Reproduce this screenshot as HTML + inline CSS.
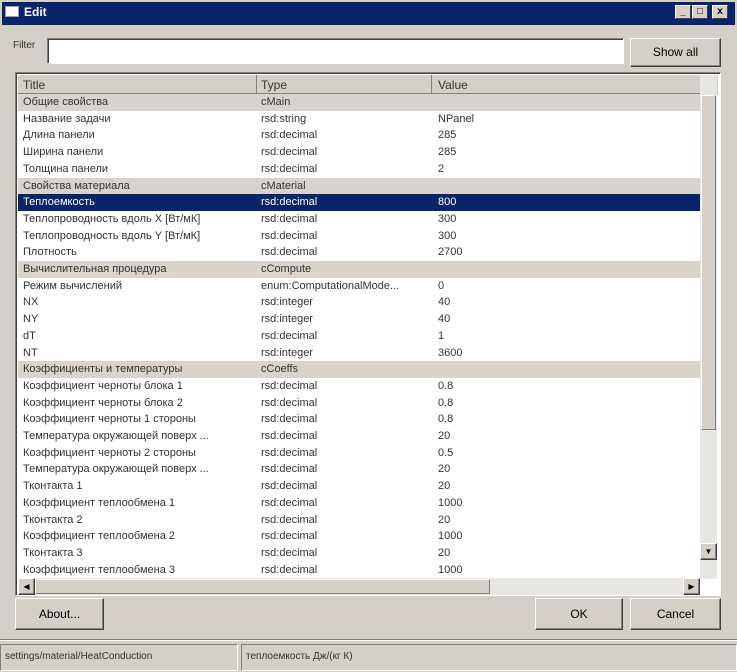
<!DOCTYPE html>
<html><head><meta charset="utf-8"><style>
*{margin:0;padding:0;box-sizing:border-box}
body{width:737px;height:672px;background:#d4d0c8;font-family:"Liberation Sans",sans-serif;font-size:11px;color:#000;position:relative;overflow:hidden}
.abs{position:absolute}
.title{left:0;top:0;width:737px;height:25px;background:#0a246a;border:2px solid #d4d0c8;border-bottom:none}
.tb{top:5px;width:16px;height:14px;background:#d4d0c8;border:1px solid;border-color:#fff #404040 #404040 #fff;font-size:10px;font-weight:bold;text-align:center;line-height:12px}
.btn{background:#d4d0c8;border:1px solid;border-color:#fff #404040 #404040 #fff;box-shadow:inset -1px -1px 0 #808080;text-align:center;font-size:12px}
.list{left:15px;top:72px;width:706px;height:524px;background:#fff;border:1px solid;border-color:#808080 #fff #fff #808080;box-shadow:inset 1px 1px 0 #404040;overflow:hidden}
.hdr{position:absolute;left:2px;top:2px;width:700px;height:19px;background:#d4d0c8;border-bottom:1px solid #808080;font-size:12px;color:#333}
.hdr span{position:absolute;top:3px}
.row{position:absolute;left:2px;width:682px;height:16.7px;font-size:11px;color:#333;white-space:nowrap}
.row span{position:absolute;top:2px;overflow:hidden}
.g{background:#d8d4cc}
.sel{background:#0a246a;color:#fff}
.c1{left:5px;width:230px}.c2{left:243px;width:170px}.c3{left:420px}
.vs{position:absolute;left:684px;top:2px;width:17px;height:504px;background:#e8e6e0}
.hs{position:absolute;left:2px;top:505px;width:682px;height:17px;background:#e8e6e0}
</style></head><body>
<div class="abs title"></div>
<div class="abs" style="left:5px;top:6px;width:14px;height:11px;background:#fff;border:1px solid #a0a0a0"></div>
<div class="abs" style="left:24px;top:5px;color:#fff;font-weight:bold;font-size:12px">Edit</div>
<div class="abs tb" style="left:675px">_</div>
<div class="abs tb" style="left:692px">□</div>
<div class="abs tb" style="left:712px">x</div>
<div class="abs" style="left:13px;top:40px;font-size:10px;color:#333">Filter</div>
<div class="abs" style="left:47px;top:38px;width:577px;height:26px;background:#fff;border:1px solid;border-color:#808080 #fff #fff #808080;box-shadow:inset 1px 1px 0 #404040"></div>
<div class="abs btn" style="left:630px;top:38px;width:91px;height:29px;line-height:27px">Show all</div>
<div class="abs list">
<div class="hdr"><span style="left:5px">Title</span><span style="left:243px">Type</span><span style="left:420px">Value</span>
<div class="abs" style="left:238px;top:0;width:1px;height:19px;background:#808080"></div>
<div class="abs" style="left:413px;top:0;width:1px;height:19px;background:#808080"></div>
<div class="abs" style="left:687px;top:4px;font-size:8px">▲</div></div>
<div id="rows"></div>
<div class="vs"><div style="position:absolute;left:1px;top:20px;width:15px;height:335px;background:#d4d0c8;border:1px solid;border-color:#fff #808080 #808080 #fff"></div>
<div class="btn" style="position:absolute;left:0;top:468px;width:17px;height:17px;font-size:8px;line-height:15px">▼</div></div>
<div class="hs"><div class="btn" style="position:absolute;left:0;top:0;width:17px;height:17px;font-size:8px;line-height:15px">◀</div>
<div style="position:absolute;left:17px;top:1px;width:455px;height:15px;background:#d4d0c8;border:1px solid;border-color:#fff #808080 #808080 #fff"></div>
<div class="btn" style="position:absolute;left:665px;top:0;width:17px;height:17px;font-size:8px;line-height:15px">▶</div></div>
</div>
<div class="abs btn" style="left:15px;top:598px;width:89px;height:32px;line-height:30px">About...</div>
<div class="abs btn" style="left:535px;top:598px;width:88px;height:32px;line-height:30px">OK</div>
<div class="abs btn" style="left:630px;top:598px;width:91px;height:32px;line-height:30px">Cancel</div>
<div class="abs" style="left:0;top:639px;width:737px;height:2px;border-top:1px solid #808080;border-bottom:1px solid #fff"></div>
<div class="abs" style="left:0;top:644px;width:238px;height:27px;border:1px solid;border-color:#808080 #fff #fff #808080;font-size:10px;padding:6px 4px;color:#333">settings/material/HeatConduction</div>
<div class="abs" style="left:241px;top:644px;width:496px;height:27px;border:1px solid;border-color:#808080 #fff #fff #808080;font-size:10px;padding:6px 4px;color:#333">теплоемкость Дж/(кг К)</div>
<script>
var d=[["Общие свойства","cMain","",1],["Название задачи","rsd:string","NPanel"],["Длина панели","rsd:decimal","285"],["Ширина панели","rsd:decimal","285"],["Толщина панели","rsd:decimal","2"],["Свойства материала","cMaterial","",1],["Теплоемкость","rsd:decimal","800",2],["Теплопроводность вдоль X [Вт/мК]","rsd:decimal","300"],["Теплопроводность вдоль Y [Вт/мК]","rsd:decimal","300"],["Плотность","rsd:decimal","2700"],["Вычислительная процедура","cCompute","",1],["Режим вычислений","enum:ComputationalMode...","0"],["NX","rsd:integer","40"],["NY","rsd:integer","40"],["dT","rsd:decimal","1"],["NT","rsd:integer","3600"],["Коэффициенты и температуры","cCoeffs","",1],["Коэффициент черноты блока 1","rsd:decimal","0.8"],["Коэффициент черноты блока 2","rsd:decimal","0.8"],["Коэффициент черноты 1 стороны","rsd:decimal","0.8"],["Температура окружающей поверх ...","rsd:decimal","20"],["Коэффициент черноты 2 стороны","rsd:decimal","0.5"],["Температура окружающей поверх ...","rsd:decimal","20"],["Тконтакта 1","rsd:decimal","20"],["Коэффициент теплообмена 1","rsd:decimal","1000"],["Тконтакта 2","rsd:decimal","20"],["Коэффициент теплообмена 2","rsd:decimal","1000"],["Тконтакта 3","rsd:decimal","20"],["Коэффициент теплообмена 3","rsd:decimal","1000"]];
var h="";d.forEach(function(r,i){var c=r[3]==1?"row g":r[3]==2?"row sel":"row";h+='<div class="'+c+'" style="top:'+(21+i*16.7)+'px"><span class="c1">'+r[0]+'</span><span class="c2">'+r[1]+'</span><span class="c3">'+r[2]+'</span></div>';});
document.getElementById("rows").innerHTML=h;
</script>
</body></html>
